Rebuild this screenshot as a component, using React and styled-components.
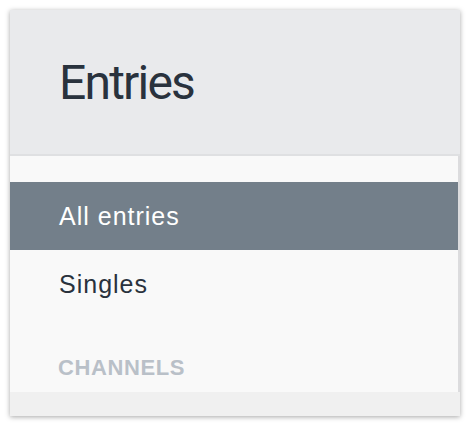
import React from "react";
import styled, { createGlobalStyle } from "styled-components";

const GlobalStyle = createGlobalStyle`
  body {
    margin: 0;
    background-color: #fff;
    font-family: "Liberation Sans", Arial, sans-serif;
  }
`;

const Page = styled.div`
  padding: 10px;
`;

const Card = styled.div`
  width: 450px;
  height: 406px;
  display: flex;
  flex-direction: column;
  background-color: #f9f9f9;
  box-shadow: 0 1px 5px rgba(0, 0, 0, 0.35);
  overflow: hidden;
`;

const Header = styled.header`
  height: 144px;
  flex-shrink: 0;
  display: flex;
  align-items: center;
  padding: 0 49px;
  background-color: #e9eaec;
  border-bottom: 2px solid #dfe0e2;
`;

const Title = styled.h1`
  margin: 0;
  font-family: Roboto, "Liberation Sans", sans-serif;
  font-size: 48px;
  font-weight: 400;
  letter-spacing: -1.8px;
  color: #29323d;
`;

const Nav = styled.nav`
  flex: 1;
  padding-top: 26px;
  border-right: 2px solid #dcdcde;
`;

const Item = styled.div`
  height: 68px;
  display: flex;
  align-items: center;
  padding: 0 49px;
  font-size: 25px;
  letter-spacing: 1px;
  color: ${(p) => (p.active ? "#fff" : "#29323d")};
  background-color: ${(p) => (p.active ? "#737f8a" : "transparent")};
`;

const Heading = styled.div`
  padding: 37px 48px 0;
  font-size: 22px;
  font-weight: 700;
  letter-spacing: 0.6px;
  color: #b9c0c8;
`;

const Footer = styled.div`
  height: 24px;
  flex-shrink: 0;
  background-color: #f0f0f0;
`;

const items = ["All entries", "Singles"];

const App = () => {
  return (
    <Page>
      <GlobalStyle />
      <Card>
        <Header>
          <Title>Entries</Title>
        </Header>
        <Nav>
          {items.map((itm, index) => (
            <Item key={index} active={index === 0}>
              {itm}
            </Item>
          ))}
          <Heading>CHANNELS</Heading>
        </Nav>
        <Footer />
      </Card>
    </Page>
  );
};

export default App;
